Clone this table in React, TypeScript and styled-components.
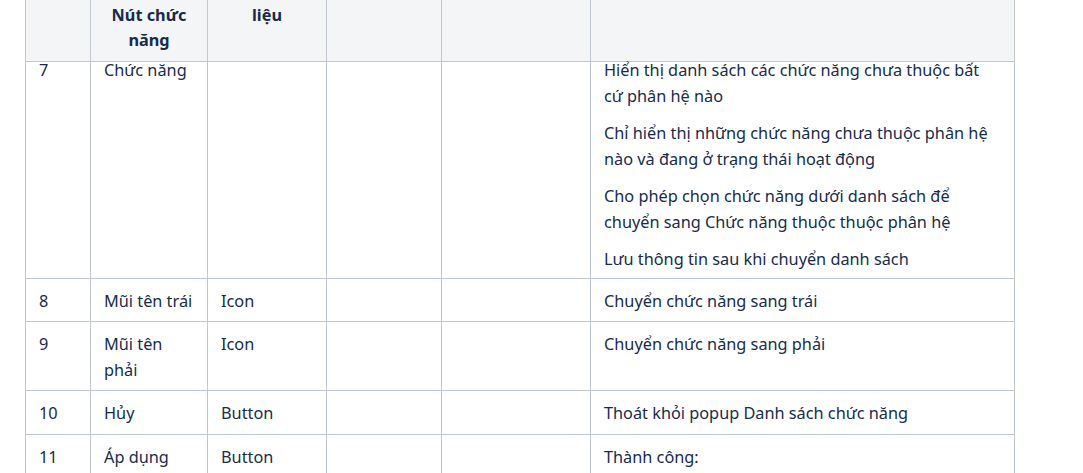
import React from "react";
import styled, { createGlobalStyle } from "styled-components";

const GlobalStyle = createGlobalStyle`
	html, body {
		margin: 0;
		padding: 0;
		background: #ffffff;
		overflow: hidden;
	}
	body {
		font-family: "Noto Sans", "Open Sans", sans-serif;
		color: #172b4d;
	}
`;

const Page = styled.div`
	padding-left: 25px;
	margin-top: -33px;
`;

const Table = styled.table`
	width: 989px;
	table-layout: fixed;
	border-collapse: collapse;
	font-size: 16.3px;
	line-height: 25.5px;
`;

const Th = styled.th`
	background: #f4f5f7;
	border: 1px solid #c1c7d0;
	padding: 10px 13px 8px;
	line-height: 25px;
	font-weight: 700;
	text-align: center;
	vertical-align: top;
`;

const Td = styled.td<{ $tight?: boolean }>`
	border: 1px solid #c1c7d0;
	padding: ${(p) => (p.$tight ? "0 13px 5px" : "10px 13px 7px")};
	vertical-align: top;
	text-align: left;
`;

const Para = styled.p`
	margin: 12px 0 0;
	&:first-child {
		margin-top: -4px;
	}
`;

const cols = [65, 117, 119, 115, 149, 424];

interface Row {
	no: string;
	name: string;
	kind?: string;
	desc: string[];
}

const rows: Row[] = [
	{ no: "8", name: "Mũi tên trái", kind: "Icon", desc: ["Chuyển chức năng sang trái"] },
	{ no: "9", name: "Mũi tên phải", kind: "Icon", desc: ["Chuyển chức năng sang phải"] },
	{ no: "10", name: "Hủy", kind: "Button", desc: ["Thoát khỏi popup Danh sách chức năng"] },
	{
		no: "11",
		name: "Áp dụng",
		kind: "Button",
		desc: ["Thành công:", "Lưu danh sách chức năng thuộc phân hệ"],
	},
];

export default function App() {
	return (
		<Page>
			<GlobalStyle />
			<Table>
				<colgroup>
					{cols.map((w, i) => (
						<col key={i} style={{ width: w }} />
					))}
				</colgroup>
				<thead>
					<tr>
						<Th>STT</Th>
						<Th>
							Tên
							<br />
							Nút chức năng
						</Th>
						<Th>Kiểu dữ liệu</Th>
						<Th>Kiểu nhập</Th>
						<Th>Bắt buộc nhập</Th>
						<Th>Mô tả</Th>
					</tr>
				</thead>
				<tbody>
					<tr>
						<Td $tight>
							<Para>7</Para>
						</Td>
						<Td $tight>
							<Para>Chức năng</Para>
						</Td>
						<Td $tight />
						<Td $tight />
						<Td $tight />
						<Td $tight>
							<Para>Hiển thị danh sách các chức năng chưa thuộc bất cứ phân hệ nào</Para>
							<Para>Chỉ hiển thị những chức năng chưa thuộc phân hệ nào và đang ở trạng thái hoạt động</Para>
							<Para>Cho phép chọn chức năng dưới danh sách để chuyển sang Chức năng thuộc thuộc phân hệ</Para>
							<Para>Lưu thông tin sau khi chuyển danh sách</Para>
						</Td>
					</tr>
					{rows.map((r) => (
						<tr key={r.no}>
							<Td>{r.no}</Td>
							<Td>{r.name}</Td>
							<Td>{r.kind}</Td>
							<Td />
							<Td />
							<Td>
								{r.desc.map((d) => (
									<div key={d}>{d}</div>
								))}
							</Td>
						</tr>
					))}
				</tbody>
			</Table>
		</Page>
	);
}
